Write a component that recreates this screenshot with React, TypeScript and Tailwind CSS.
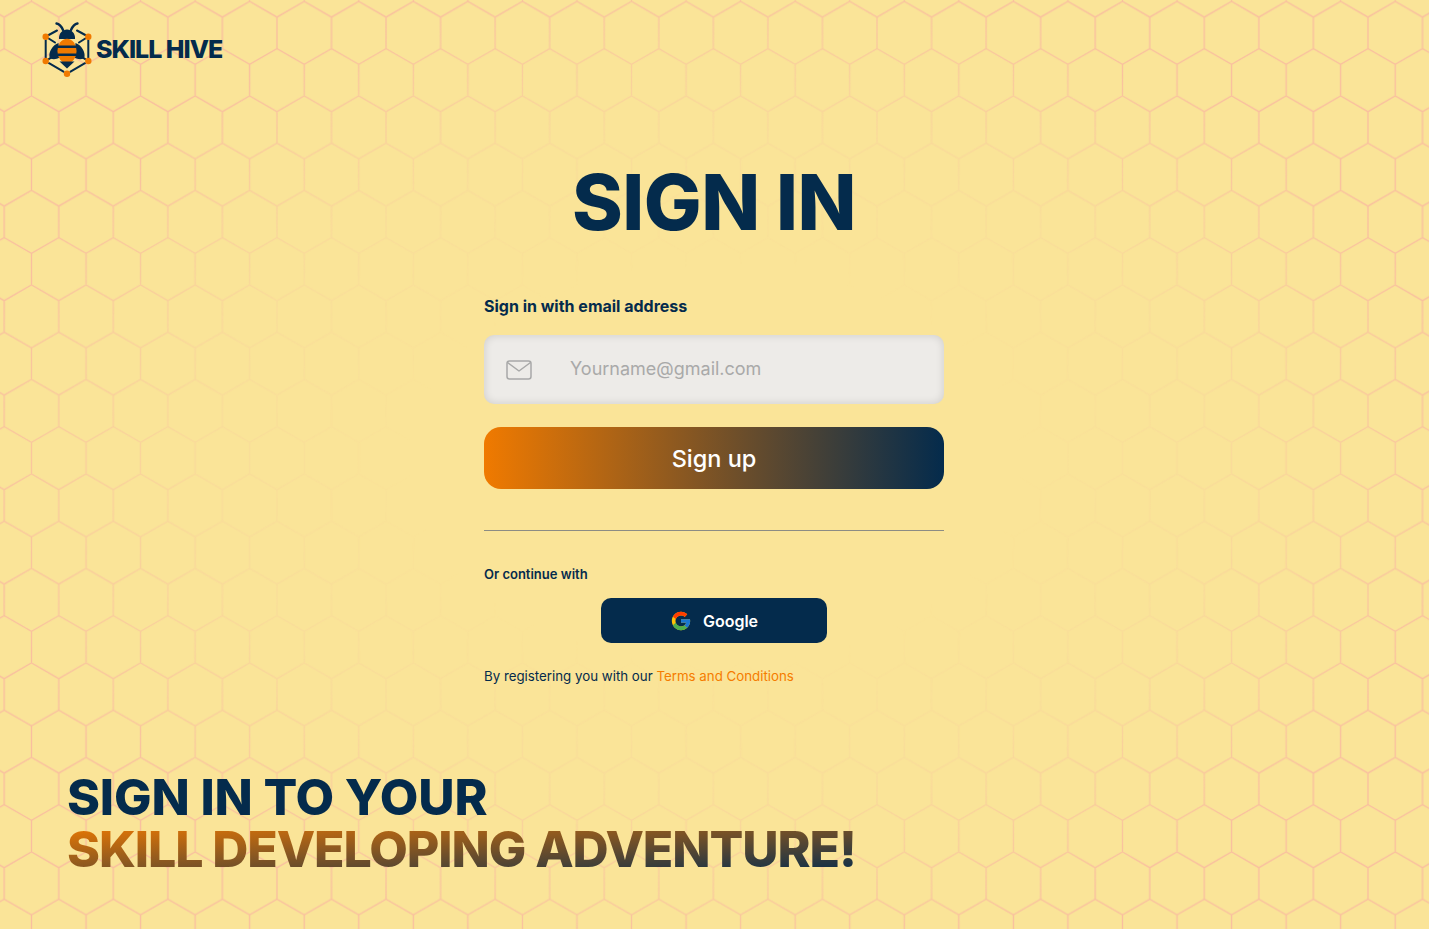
import React from "react";
import { FcGoogle } from "react-icons/fc";

function HiveLogo() {
  return (
    <svg viewBox="10 3 54 60" className="h-[60px] w-[54px] shrink-0" fill="none">
      {/* outer hex links */}
      <g stroke="#042b4c" strokeWidth="2" strokeLinecap="round">
        <path d="M15.7 25v18M58.3 25v18" />
        <path d="M19 48.2 33.5 56.6M55 48.2 40.5 56.6" />
        <path d="M18.7 20 27 15.500M55.3 20 47 15.500" />
        <path d="M18.7 23.500 25 27.500M55.3 23.500 49 27.500" />
        <path d="M18.7 44.200 23 41.500M55.3 44.200 51 41.500" />
      </g>
      {/* antennae */}
      <path d="M26.500 8.500c3 .5 5 3 6.500 6.500M47.500 8.500c-3 .5-5 3-6.500 6.500" stroke="#042b4c" strokeWidth="2.400" strokeLinecap="round" />
      {/* head */}
      <path d="M29 24c-.5-5.500 3.500-9.500 8-9.500s8.500 4 8 9.500z" fill="#042b4c" />
      {/* wings */}
      <path d="M28.500 28C22.500 30 18.500 37 19.500 42c.6 2.700 6.500 3 10 .5zM45.500 28c6 2 10 9 9 14-.6 2.700-6.500 3-10 .5z" fill="#042b4c" />
      {/* body */}
      <ellipse cx="37" cy="36" rx="9.600" ry="12.200" fill="#f07a00" />
      <path d="M27.500 30.500h19v2.400h-19zM27.500 38.500h19v2.400h-19z" fill="#042b4c" />
      <path d="M29.500 46.500h15L37 53.500z" fill="#042b4c" />
      {/* nodes */}
      <g fill="#f07a00">
        <circle cx="15.700" cy="21.700" r="3.200" />
        <circle cx="58.300" cy="21.700" r="3.200" />
        <circle cx="15.700" cy="46" r="3.200" />
        <circle cx="58.300" cy="46" r="3.200" />
        <circle cx="37" cy="58.700" r="3.200" />
      </g>
    </svg>
  );
}

function HexBackground() {
  return (
    <svg className="absolute inset-0 h-full w-full" aria-hidden="true">
      <defs>
        <pattern
          id="hex"
          width="54.55"
          height="94.5"
          patternUnits="userSpaceOnUse"
          patternTransform="translate(4.2 1.4)"
        >
          <path
            d="M0 15.750 27.275 0 54.550 15.750M0 15.750V47.250L27.275 63 54.550 47.250V15.750M27.275 63V94.500"
            fill="none"
            stroke="#f9bd9f"
            strokeWidth="1.300"
          />
        </pattern>
        <radialGradient id="fade" cx="0.5" cy="0.5" r="0.707">
          <stop offset="0.3" stopColor="#fff" stopOpacity="0" />
          <stop offset="0.5" stopColor="#fff" stopOpacity="0.2" />
          <stop offset="0.75" stopColor="#fff" stopOpacity="1" />
        </radialGradient>
        <mask id="fadeMask">
          <rect width="100%" height="100%" fill="url(#fade)" />
        </mask>
      </defs>
      <rect width="100%" height="100%" fill="url(#hex)" mask="url(#fadeMask)" />
    </svg>
  );
}

export default function App() {
  return (
    <div className="relative flex h-screen flex-col overflow-hidden bg-[#fae498] font-['Inter','Liberation_Sans',sans-serif] text-[#042b4c]">
      <HexBackground />

      <header className="relative flex items-center pl-[40px] pt-[18px]">
        <HiveLogo />
        <span className="ml-[2px] mt-[2px] text-[25px] font-extrabold leading-none tracking-[-1px]">SKILL HIVE</span>
      </header>

      <main className="relative ml-[484px] flex w-[460px] flex-col">
        <h1 className="mt-[77px] text-center text-[77px] font-extrabold leading-[94px] tracking-[-0.5px]">SIGN IN</h1>

        <label className="mt-[46px] text-[16px] font-bold leading-[22px]">Sign in with email address</label>

        <div className="mt-[18px] flex h-[69px] items-center rounded-[10px] bg-[#edebe8] pl-[22px] shadow-[inset_0_0_8px_rgba(0,0,0,0.14)]">
          <svg viewBox="0 0 26 20" className="h-[20px] w-[26px] shrink-0" fill="none" stroke="#a8a8a8" strokeWidth="1.500">
            <rect x="1" y="1" width="24" height="18" rx="2.500" />
            <path d="M1.500 2.500 13 11 24.500 2.500" strokeLinejoin="round" />
          </svg>
          <input
            placeholder="Yourname@gmail.com"
            className="mb-[2px] ml-[38px] w-[300px] bg-transparent text-[18px] leading-[24px] outline-none placeholder:text-[#a9a9a9]"
          />
        </div>

        <button className="mt-[23px] flex h-[62px] items-center justify-center rounded-[17px] bg-linear-to-r/srgb from-[#f07a00] to-[#042b4c] pt-[2px] text-[23.5px] font-medium text-white">
          Sign up
        </button>

        <div className="mt-[41px] h-px shrink-0 bg-[#8c8c84]" />

        <p className="mt-[35px] text-[13px] font-semibold leading-[16px]">Or continue with</p>

        <button className="mx-auto mt-[16px] flex h-[45px] w-[226px] items-center justify-center gap-[11px] rounded-[10px] bg-[#042b4c] text-[16px] font-semibold text-white">
          <FcGoogle className="h-[22px] w-[22px]" />
          Google
        </button>

        <p className="mt-[25px] text-[13.3px] leading-[16px]">
          By registering you with our <span className="text-[#f57c00]">Terms and Conditions</span>
        </p>
      </main>

      <div className="relative mt-[87px] pl-[67px] text-[50px] font-extrabold leading-[52px]">
        <div className="tracking-[-0.15px]">SIGN IN TO YOUR</div>
        <div className="tracking-[-1.08px]">
          <span className="inline-block bg-linear-to-br/srgb from-[#f07a00] to-[#042b4c] bg-clip-text text-transparent">
            SKILL DEVELOPING ADVENTURE!
          </span>
        </div>
      </div>
    </div>
  );
}
